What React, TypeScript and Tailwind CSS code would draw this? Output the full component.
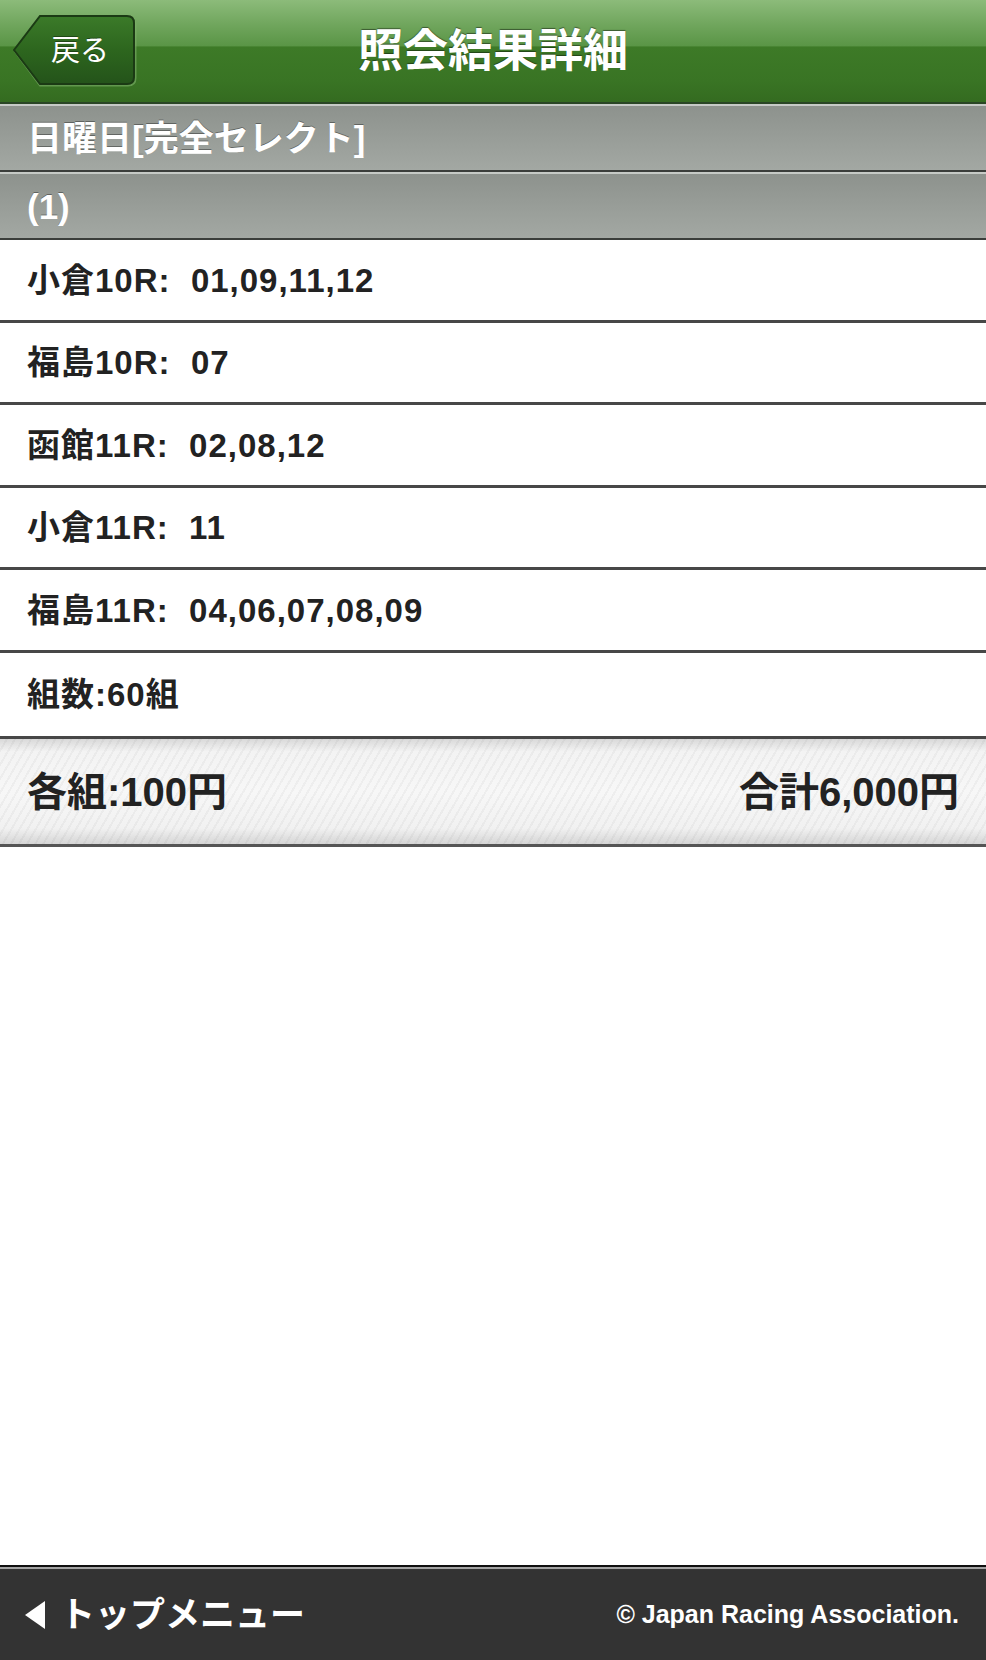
import React from 'react';

type Line = { label: string; value: string };

const lines: Line[] = [
  { label: '小倉10R:', value: '01,09,11,12' },
  { label: '福島10R:', value: '07' },
  { label: '函館11R:', value: '02,08,12' },
  { label: '小倉11R:', value: '11' },
  { label: '福島11R:', value: '04,06,07,08,09' },
];

const font = "font-['Liberation_Sans','Noto_Sans_CJK_JP',sans-serif]";

function BackButton() {
  return (
    <button className="relative ml-[13px] flex h-[72px] w-[124px] items-center justify-self-start pl-[38px] pr-[27px]">
      <svg
        className="absolute inset-0 h-full w-full"
        viewBox="0 0 124 72"
        fill="none"
      >
        <defs>
          <linearGradient id="backFill" x1="0" y1="0" x2="0" y2="1">
            <stop offset="0" stopColor="#3b7a29" />
            <stop offset="0.5" stopColor="#2d661e" />
            <stop offset="1" stopColor="#24531a" />
          </linearGradient>
        </defs>
        <path
          d="M27,2.5 H115 Q122.5,2.5 122.5,10 V63 Q122.5,70.5 115,70.5 H27 L2,36.5 Z"
          stroke="#7fb36a"
          strokeWidth="2"
          opacity="0.6"
        />
        <path
          d="M27,1 H114 Q121,1 121,8 V62 Q121,69 114,69 H27 L1,35 Z"
          fill="url(#backFill)"
          stroke="#1b3a14"
          strokeWidth="2"
        />
      </svg>
      <span
        className={`relative text-[29px] leading-none text-white ${font} [text-shadow:0_-1px_0_rgba(0,0,0,0.35)]`}
      >
        戻る
      </span>
    </button>
  );
}

function Header() {
  return (
    <div className="border-b-2 border-[#2a4625]">
      <div className="grid h-[102px] grid-cols-[1fr_auto_1fr] items-center bg-[linear-gradient(to_bottom,#8cbb7a_0%,#6fa55c_25%,#5a9546_45%,#3d7a27_46%,#397424_80%,#346b20_100%)]">
        <BackButton />
        <h1
          className={`text-[45px] font-bold leading-none text-white ${font} [text-shadow:0_-1px_1px_rgba(0,0,0,0.45)]`}
        >
          照会結果詳細
        </h1>
        <div />
      </div>
    </div>
  );
}

function GrayBar({ children }: { children: React.ReactNode }) {
  return (
    <div className="flex h-[68px] items-center border-b-[2px] border-t-2 border-b-[#3b3e3b] border-t-[#c6cac6] bg-[linear-gradient(to_bottom,#8d928d,#a3a8a3)] px-[27px]">
      <span
        className={`text-[35px] font-bold leading-none text-white ${font} [text-shadow:0_-1px_0_rgba(0,0,0,0.35)]`}
      >
        {children}
      </span>
    </div>
  );
}

function Row({ children, h }: { children: React.ReactNode; h: string }) {
  return (
    <div
      className={`flex items-center border-b-[3px] border-[#474747] bg-white px-[27px] ${h}`}
    >
      <span
        className={`whitespace-pre text-[33px] font-bold leading-none tracking-[1px] text-[#222] ${font}`}
      >
        {children}
      </span>
    </div>
  );
}

function Footer() {
  return (
    <div className="border-t-[2px] border-[#0f0f0f]">
      <div className="flex h-[93px] items-center justify-between border-t-2 border-[#a3a3a3] bg-[#333333] pl-[25px] pr-[27px]">
        <div className="flex items-center gap-[15px]">
          <svg width="20" height="28" viewBox="0 0 20 28">
            <polygon points="20,0 20,28 0,14" fill="#fff" />
          </svg>
          <span
            className={`text-[35px] font-bold leading-none text-white ${font}`}
          >
            トップメニュー
          </span>
        </div>
        <span
          className={`text-[25px] font-bold leading-none text-white ${font}`}
        >
          © Japan Racing Association.
        </span>
      </div>
    </div>
  );
}

const rowHeights = ['h-[83px]', 'h-[82px]', 'h-[83px]', 'h-[82px]', 'h-[83px]'];

export default function App() {
  return (
    <div className={`flex h-[1660px] w-full flex-col bg-white ${font}`}>
      <Header />
      <GrayBar>日曜日[完全セレクト]</GrayBar>
      <GrayBar>(1)</GrayBar>
      {lines.map((l, i) => (
        <Row key={l.label} h={rowHeights[i]}>
          {l.label}
          {'  '}
          {l.value}
        </Row>
      ))}
      <Row h="h-[86px]">組数:60組</Row>
      <div className="flex h-[108px] items-center justify-between border-b-[3px] border-[#555] bg-[repeating-linear-gradient(120deg,rgba(0,0,0,0)_0px,rgba(0,0,0,0)_5px,rgba(0,0,0,0.035)_5px,rgba(0,0,0,0.035)_7px),linear-gradient(to_bottom,#d9d9d9_0%,#f3f3f3_12%,#f7f7f7_50%,#f1f1f1_85%,#d6d6d6_100%)] px-[27px]">
        <span className={`text-[40px] font-bold leading-none text-[#222] ${font}`}>
          各組:100円
        </span>
        <span className={`text-[40px] font-bold leading-none text-[#222] ${font}`}>
          合計6,000円
        </span>
      </div>
      <div className="flex-1" />
      <Footer />
    </div>
  );
}
